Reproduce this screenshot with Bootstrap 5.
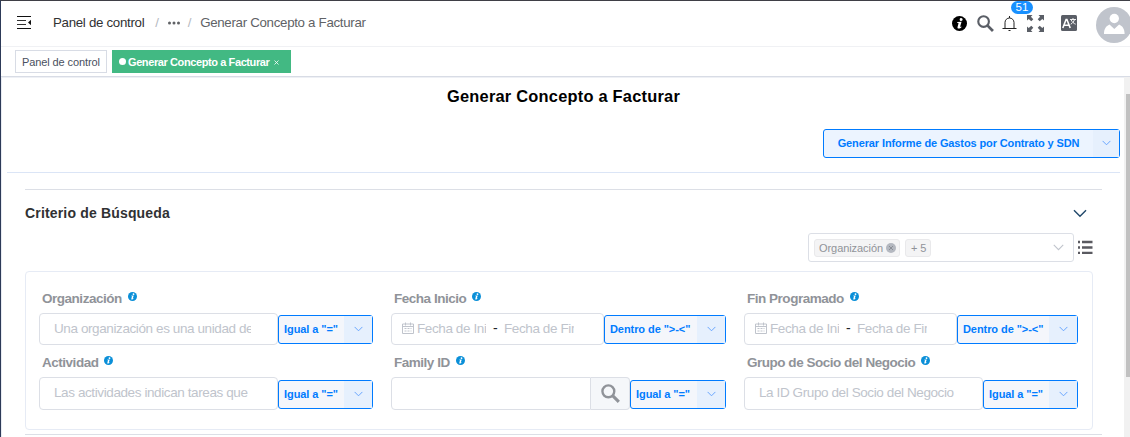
<!DOCTYPE html>
<html lang="es">
<head>
<meta charset="utf-8">
<meta name="viewport" content="width=device-width, initial-scale=1">
<title>Generar Concepto a Facturar</title>
<link href="https://cdn.jsdelivr.net/npm/bootstrap@5.3.0/dist/css/bootstrap.min.css" rel="stylesheet">
<style>
body{font-family:"Liberation Sans",Arial,sans-serif;font-size:14px;line-height:16px;color:#303133;height:437px;border-top:1px solid #3f3f46;border-left:1px solid #2d3a58;background:#fff}
svg{display:block;flex:none}
.topbar{height:46px;border-bottom:1px solid #f0f1f4}
.crumb{font-size:13.3px;letter-spacing:-.3px;padding-left:21px;padding-bottom:2px}
.crumb .sep{color:#b4b8c0}
.tools{padding-bottom:1px}
.tabs{height:30px;border-bottom:1px solid #d8dce5;padding:3px 0 0 14px;gap:5px}
.tab{height:23px;font-size:11px;letter-spacing:-.1px;border:1px solid #d8dce5;color:#495060;padding:0 6px;white-space:nowrap;width:92px}
.tab.on{background:#42b983;border-color:#42b983;color:#fff;font-weight:700;width:179px;letter-spacing:-.4px}
.dot{width:7px;height:7px;background:#fff;border-radius:50%;margin-right:2px;flex:none}
.bell{width:16px}
.count{position:absolute;left:9px;top:-14px;width:22px;height:13px;border-radius:7px;background:#1890ff;color:#fff;font-size:11.5px;line-height:13px;text-align:center}
.content-area{border-left:1px solid #e8ebf2;border-top:1px solid #eef0f5;padding:0 4px 0 5px}
.track{width:6px;background:#f1f1f1;padding:17px 0 0 2px}
.thumb{height:283px;background:#c1c1c1}
.title{font-size:16.4px;letter-spacing:.23px;color:#000;font-weight:700;padding-top:9px;line-height:18px}
.drop{height:29px;border:1px solid #007bff;border-radius:3px;background:#f4f6fb;color:#007bff;font-size:11px;font-weight:700;white-space:nowrap;letter-spacing:-.07px}
.drop .lbl{padding:0 0 2px 5px}
.drop .arr{width:28px;background:#e6f0fd;padding-bottom:1px}
.arr svg{color:#5b9dff}
.report{width:297px;background:#ecf4ff}
.report .lbl{letter-spacing:-.12px;padding-left:0}
.report .arr{width:26px}
.actions{height:95px;padding-top:51px;border-bottom:1px solid #dbe5f6}
.panel{margin:16px 18px 0 18px;border-top:1px solid #dcdfe6}
.phead{height:43px;padding-top:3px}
.phead b{letter-spacing:.17px}
.picker{width:266px;height:29px;border:1px solid #dcdfe6;border-radius:3px;padding:0 9px 0 5px}
.chip{height:18px;border:1px solid #e9e9eb;background:#f4f4f5;border-radius:3px;color:#909399;font-size:11px;letter-spacing:-.07px;padding:0 3px 0 4px}
.criteria{width:1068px;height:159px;border:1px solid #e6ebf5;border-radius:4px;margin-top:9px;padding:16px 13px 0 13px;column-gap:18px}
.fld{height:64px}
.fld .cap{height:25px;padding-left:3px;font-weight:700;font-size:13.5px;letter-spacing:-.48px;color:#909399;gap:6px;padding-top:3px}
.cap svg{margin-top:1px}
.box{height:32px;border:1px solid #dcdfe6;border-radius:4px}
.box input{border:0;outline:0;padding:0;background:transparent;font-size:13.5px;letter-spacing:-.4px;height:26px;margin-bottom:2px}
.box input::placeholder{color:#c0c4cc;opacity:1}
.addon{width:39px;height:32px;background:#f5f7fa;border:1px solid #dcdfe6;border-left:0;border-radius:0 4px 4px 0}
.joined{border-radius:4px 0 0 4px}
.drop-field{margin-top:2px}
.fld:nth-child(n+4) .box,.fld:nth-child(n+4) .addon{height:33px}
.fld:nth-child(n+4) .drop-field{margin-top:3px}
</style>
</head>
<body class="overflow-hidden d-flex flex-column">
<svg width="0" height="0" class="position-absolute">
<symbol id="chev" viewBox="0 0 10 6"><path d="M.7.7 5 5 9.3.7" fill="none" stroke="currentColor"/></symbol>
<symbol id="info" viewBox="0 0 16 16"><circle cx="8" cy="8" r="8" fill="currentColor"/><path d="M9.8 2.200a1.600 1.600 0 1 1-.1 3.200 1.600 1.600 0 0 1 .1-3.200M5.500 6.500l4.700-.4-1.500 5.200c-.1.6.3.5 1-.1l.5.500c-1.600 2.200-4.900 2.400-4.300.1l1-3.800c.1-.5-.4-.6-1.600-.7z" fill="#fff"/></symbol>
<symbol id="mag" viewBox="0 0 16 16"><circle cx="6.200" cy="6.200" r="5" fill="none" stroke="currentColor" stroke-width="2"/><path d="m10 10 5 5" stroke="currentColor" stroke-width="2.600"/></symbol>
<symbol id="cal" viewBox="0 0 12 12"><path d="M.5 2h11v9.500H.500zM.5 4.500h11M3.500.500v3M8.500.500v3M2.500 6.500h2m1 0h2m1 0h1M2.500 9h2m1 0h2m1 0h1" fill="none" stroke="currentColor"/></symbol>
</svg>
<header class="topbar d-flex align-items-center">
<svg class="ms-3" width="14" height="13" viewBox="0 0 14 13" style="margin-bottom:2px"><path d="M0 .5h14M0 12.500h14" stroke="#111"/><path d="M0 4.500h9M0 8.500h9" stroke="#333"/><path d="M14 3.800v5.400L11 6.500z" fill="#111"/></svg>
<nav class="crumb d-flex align-items-center" style="margin-left:1px"><span>Panel de control</span><span class="sep" style="margin-left:11px">/</span>
<svg style="margin-left:9px" width="12" height="4" viewBox="0 0 12 4"><path d="M0 2a1.500 1.500 0 1 0 3 0 1.500 1.500 0 0 0-3 0m4.500 0a1.500 1.500 0 1 0 3 0 1.500 1.500 0 0 0-3 0M9 2a1.500 1.500 0 1 0 3 0 1.500 1.500 0 0 0-3 0" fill="#606266"/></svg>
<span class="sep ms-2">/</span><span style="margin-left:9px;color:#606266">Generar Concepto a Facturar</span></nav>
<div class="tools ms-auto d-flex align-items-center">
<svg width="15" height="15" class="text-black"><use href="#info"/></svg>
<svg width="17" height="17" style="color:#5a5e66;margin-left:10px"><use href="#mag"/></svg>
<div class="bell position-relative" style="margin-left:8px"><svg width="15" height="16" viewBox="0 0 15 16"><path d="M.5 13.500h14M3 13.500V7.500a4.500 4.500 0 0 1 9 0v6M7.500 1v2M6.500 15.500h2" fill="none" stroke="#222"/></svg><span class="count">51</span></div>
<svg width="17" height="17" viewBox="0 0 17 17" style="margin-left:9px"><path d="M0 0h5.500L3.900 1.700 6.300 4.200 4.300 6.200 1.700 3.900 0 5.500zM17 0v5.500l-1.700-1.600-2.600 2.300-2-2 2.400-2.500L11.500 0zM0 17v-5.500l1.700 1.600 2.600-2.400 2 2-2.400 2.600L5.500 17zM17 17h-5.500l1.600-1.700-2.400-2.600 2-2 2.600 2.400 1.700-1.600z" fill="#5a5e66"/></svg>
<svg width="16" height="16" viewBox="0 0 16 16" style="margin-left:17px"><rect width="16" height="16" rx="1.500" fill="#5a5e66"/><path d="m1.800 13 3.300-8.500h.8L9.200 13M3 10.200h5" fill="none" stroke="#fff" stroke-width="1.600"/><path d="M9 4.500h6M12 3v1.500M9.700 9.200c2-1 3.200-2.700 3.700-4.500M10.200 5c1 2 2.500 3.500 4.500 4.200" fill="none" stroke="#fff" stroke-width=".9"/></svg>
<svg width="34" height="36" viewBox="0 0 34 36" style="margin-left:19px;margin-top:3px"><circle cx="18" cy="18" r="18" fill="#c0c4cc"/><circle cx="18.300" cy="11.500" r="4.700" fill="#fff"/><path d="M8 27c0-5 2-8 5.500-9.500l4.800 4.500 4.800-4.500c3.500 1.500 5.500 4.500 5.500 9.500z" fill="#fff"/></svg>
</div>
</header>
<div class="tabs d-flex">
<div class="tab d-flex align-items-center">Panel de control</div>
<div class="tab on d-flex align-items-center"><i class="dot"></i>Generar Concepto a Facturar<svg width="5" height="5" viewBox="0 0 5 5" style="margin:2px 0 0 5px"><path d="m.5.5 4 4m0-4-4 4" stroke="#fff" stroke-width=".8"/></svg></div>
</div>
<div class="d-flex flex-fill">
<main class="content-area flex-fill">
<div class="actions position-relative d-flex justify-content-end">
<h1 class="title position-absolute top-0 start-0 w-100 m-0 text-center">Generar Concepto a Facturar</h1>
<div class="drop report d-flex"><span class="lbl flex-fill d-flex align-items-center justify-content-center">Generar Informe de Gastos por Contrato y SDN</span><span class="arr d-flex align-items-center justify-content-center"><svg width="9" height="6"><use href="#chev"/></svg></span></div>
</div>
<section class="panel">
<div class="phead d-flex align-items-center justify-content-between"><b>Criterio de Búsqueda</b><svg width="14" height="9" style="margin-right:15px;color:#22496b"><use href="#chev"/></svg></div>
<div class="d-flex justify-content-end align-items-center" style="padding-right:9px">
<div class="picker d-flex align-items-center"><span class="chip d-flex align-items-center">Organización<svg width="10" height="10" viewBox="0 0 10 10" style="margin-left:3px"><circle cx="5" cy="5" r="5" fill="#b4b8c0"/><path d="m3 3 4 4m0-4-4 4" stroke="#8a8e96"/></svg></span><span class="chip d-flex align-items-center" style="margin-left:5px;width:26px;padding-left:5px">+ 5</span><svg class="ms-auto" width="11" height="7" style="color:#c0c4cc"><use href="#chev"/></svg></div>
<svg width="15" height="14" viewBox="0 0 15 14" style="margin-left:4px;margin-bottom:2px"><path d="M0 2h2m2 0h10.500M0 7.500h2m2 0h10.500M0 13h2m2 0h10.500" stroke="#5a5a60" stroke-width="2.400"/></svg>
</div>
<div class="criteria d-flex flex-wrap align-content-start" id="criteria"></div>
</section>
<div style="margin:4px 18px 0 18px;border-top:1px solid #dcdfe6"></div>
</main>
<aside class="track"><div class="thumb"></div></aside>
</div>
<script>
const use=(id,w,h,c)=>`<svg width="${w}" height="${h}" ${c?`style="color:${c}"`:""}><use href="#${id}"/></svg>`;
const fields=[
["Organización",239,"Igual a \"=\"",95,"text","Una organización es una unidad de negocio"],
["Fecha Inicio",213,"Dentro de \">-<\"",122,"range"],
["Fin Programado",213,"Dentro de \">-<\"",121,"range"],
["Actividad",239,"Igual a \"=\"",95,"text","Las actividades indican tareas que"],
["Family ID",200,"Igual a \"=\"",96,"find"],
["Grupo de Socio del Negocio",239,"Igual a \"=\"",95,"text","La ID Grupo del Socio del Negocio"]];
document.getElementById("criteria").innerHTML=fields.map(([cap,w,op,ow,kind,ph])=>{
const inner=kind==="text"?`<input style="margin-left:14px;width:197px" placeholder="${ph}">`:
kind==="range"?`<span style="margin:0 3px 2px 10px">${use("cal",12,12,"#c0c4cc")}</span><input style="width:69px" placeholder="Fecha de Inicio"><span class="text-dark" style="margin:0 7px 2px;width:4px">-</span><input style="width:70px" placeholder="Fecha de Fin">`:"";
return `<div class="fld"><div class="cap d-flex">${cap}${use("info",9,9,"#0a8fd8")}</div><div class="d-flex"><div class="box d-flex align-items-center ${kind==="find"?"joined":""}" style="width:${w}px">${inner}</div>${kind==="find"?`<div class="addon d-flex align-items-center justify-content-center">${use("mag",19,19,"#909399")}</div>`:""}<div class="drop drop-field d-flex" style="width:${ow}px"><span class="lbl flex-fill d-flex align-items-center">${op}</span><span class="arr d-flex align-items-center justify-content-center">${use("chev",9,6)}</span></div></div></div>`}).join("");
</script>
<script src="https://cdn.jsdelivr.net/npm/bootstrap@5.3.0/dist/js/bootstrap.bundle.min.js"></script>
</body>
</html>
